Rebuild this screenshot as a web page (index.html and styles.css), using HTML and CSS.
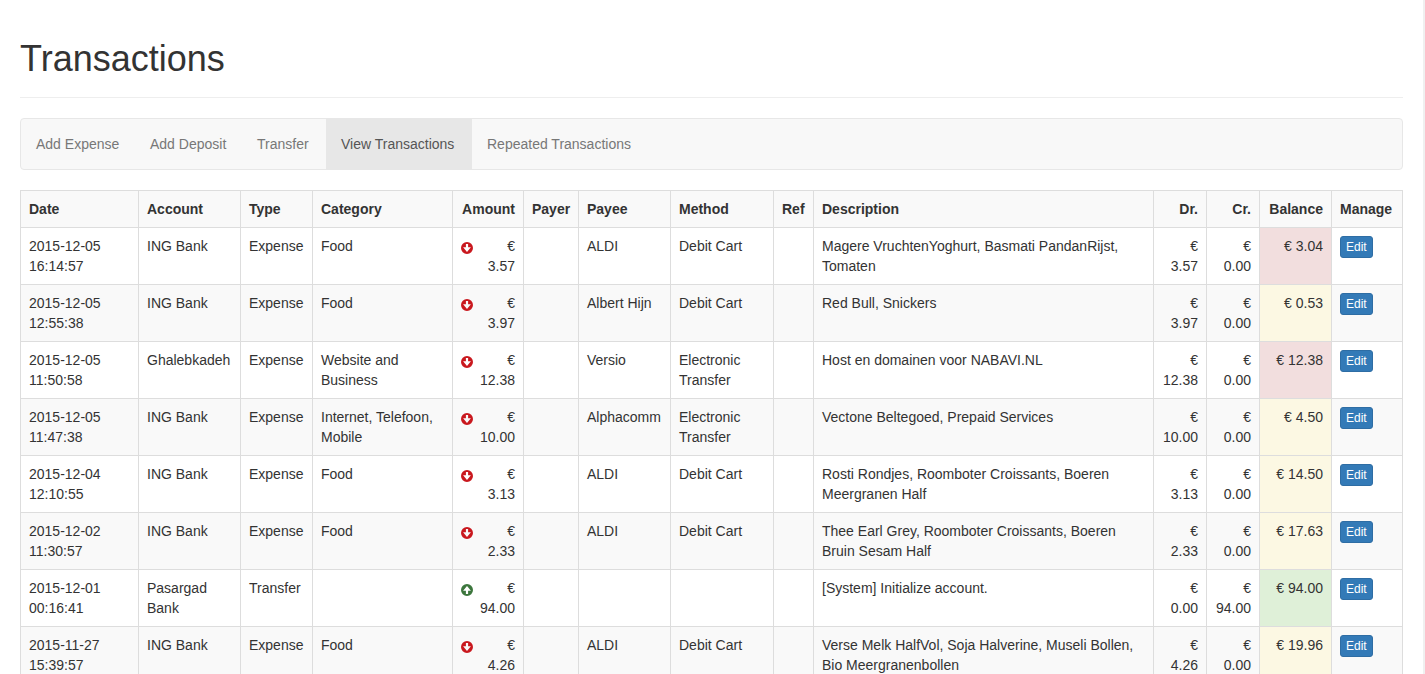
FILE: index.html
```html
<!DOCTYPE html>
<html lang="en">
<head>
<meta charset="utf-8">
<title>Transactions</title>
<link rel="stylesheet" href="styles.css">
</head>
<body>
<svg class="sprite" aria-hidden="true">
  <symbol id="circle-arrow" viewBox="0 0 12 12">
    <path fill-rule="evenodd" d="M6 0a6 6 0 1 0 0 12A6 6 0 0 0 6 0zM4.900 2.100h2.200V5.300H9.900L6 9.900 2.100 5.300H4.900z"/>
  </symbol>
</svg>
<main class="page">
  <h1 class="page-header">Transactions</h1>
  <nav class="navbar" aria-label="Transactions">
    <a class="nav-link" href="#">Add Expense</a>
    <a class="nav-link" href="#">Add Deposit</a>
    <a class="nav-link" href="#">Transfer</a>
    <a class="nav-link active" href="#" aria-current="page">View Transactions</a>
    <a class="nav-link" href="#">Repeated Transactions</a>
  </nav>
  <table class="table">
    <colgroup>
      <col class="c-date"><col class="c-account"><col class="c-type"><col class="c-category"><col class="c-amount"><col class="c-payer"><col class="c-payee"><col class="c-method"><col class="c-ref"><col class="c-description"><col class="c-dr"><col class="c-cr"><col class="c-balance"><col class="c-manage">
    </colgroup>
    <thead>
      <tr><th>Date</th><th>Account</th><th>Type</th><th>Category</th><th class="num">Amount</th><th>Payer</th><th>Payee</th><th>Method</th><th>Ref</th><th>Description</th><th class="num">Dr.</th><th class="num">Cr.</th><th class="num">Balance</th><th>Manage</th></tr>
    </thead>
    <tbody id="rows"></tbody>
  </table>
</main>
<script src="app.js"></script>
</body>
</html>
```

FILE: styles.css
```css
* { box-sizing: border-box; }

html { overflow: hidden; }

body {
  margin: 0;
  color: #333;
  background: #fff;
  font: 14px/20px "Liberation Sans", Arial, sans-serif;
}

.sprite { display: none; }

.page {
  min-height: 100vh;
  padding: 39px 20px 0;
  border-right: 2px solid #f0f0f0;
}

.page-header {
  margin: 0 0 20px;
  padding-bottom: 18px;
  border-bottom: 1px solid #eee;
  font-size: 36px;
  font-weight: 400;
  line-height: 40px;
}

.navbar {
  display: grid;
  grid-template-columns: 114px 107px 84px 146px auto;
  justify-content: start;
  margin-bottom: 20px;
  border: 1px solid #e7e7e7;
  border-radius: 4px;
  background: #f8f8f8;
}

.nav-link {
  padding: 15px;
  color: #777;
  text-decoration: none;
  white-space: nowrap;
}

.nav-link.active {
  color: #555;
  background: #e7e7e7;
}

.table {
  width: 100%;
  table-layout: fixed;
  border-collapse: collapse;
}

.table th,
.table td {
  padding: 8px;
  border: 1px solid #ddd;
  text-align: left;
  vertical-align: top;
}

.table thead tr,
.table tbody tr:nth-child(even) { background: #f9f9f9; }

.table .num { text-align: right; }

.table .danger { background: #f2dede; }
.table .warning { background: #fcf8e3; }
.table .success { background: #dff0d8; }

.c-date { width: 118px; }
.c-account { width: 102px; }
.c-type { width: 72px; }
.c-category { width: 140px; }
.c-amount { width: 71px; }
.c-payer { width: 55px; }
.c-payee { width: 92px; }
.c-method { width: 103px; }
.c-ref { width: 40px; }
.c-dr { width: 53px; }
.c-cr { width: 53px; }
.c-balance { width: 72px; }
.c-manage { width: 71px; }

.amount {
  display: flex;
  justify-content: space-between;
}

.icon {
  width: 12px;
  height: 12px;
  margin-top: 6px;
}

.icon.out { fill: #c9181e; }
.icon.in { fill: #3c763d; transform: rotate(180deg); }

.edit {
  display: block;
  padding: 1px 5px;
  border: 1px solid #2e6da4;
  border-radius: 3px;
  color: #fff;
  background: #337ab7;
  font: 12px/18px "Liberation Sans", Arial, sans-serif;
}
```

FILE: app.js
```js
const rows = [
  ["2015-12-05 16:14:57", "ING Bank", "Expense", "Food", "out", "3.57", "ALDI", "Debit Cart", "Magere VruchtenYoghurt, Basmati PandanRijst, Tomaten", "3.57", "0.00", "3.04", "danger"],
  ["2015-12-05 12:55:38", "ING Bank", "Expense", "Food", "out", "3.97", "Albert Hijn", "Debit Cart", "Red Bull, Snickers", "3.97", "0.00", "0.53", "warning"],
  ["2015-12-05 11:50:58", "Ghalebkadeh", "Expense", "Website and Business", "out", "12.38", "Versio", "Electronic Transfer", "Host en domainen voor NABAVI.NL", "12.38", "0.00", "12.38", "danger"],
  ["2015-12-05 11:47:38", "ING Bank", "Expense", "Internet, Telefoon, Mobile", "out", "10.00", "Alphacomm", "Electronic Transfer", "Vectone Beltegoed, Prepaid Services", "10.00", "0.00", "4.50", "warning"],
  ["2015-12-04 12:10:55", "ING Bank", "Expense", "Food", "out", "3.13", "ALDI", "Debit Cart", "Rosti Rondjes, Roomboter Croissants, Boeren Meergranen Half", "3.13", "0.00", "14.50", "warning"],
  ["2015-12-02 11:30:57", "ING Bank", "Expense", "Food", "out", "2.33", "ALDI", "Debit Cart", "Thee Earl Grey, Roomboter Croissants, Boeren Bruin Sesam Half", "2.33", "0.00", "17.63", "warning"],
  ["2015-12-01 00:16:41", "Pasargad Bank", "Transfer", "", "in", "94.00", "", "", "[System] Initialize account.", "0.00", "94.00", "94.00", "success"],
  ["2015-11-27 15:39:57", "ING Bank", "Expense", "Food", "out", "4.26", "ALDI", "Debit Cart", "Verse Melk HalfVol, Soja Halverine, Museli Bollen, Bio Meergranenbollen", "4.26", "0.00", "19.96", "warning"]
];

document.getElementById("rows").innerHTML = rows.map(
  ([date, account, type, category, dir, amount, payee, method, description, dr, cr, balance, state]) => `
  <tr>
    <td>${date.replace(" ", "<br>")}</td><td>${account}</td><td>${type}</td><td>${category}</td>
    <td class="num"><div class="amount"><svg class="icon ${dir}" aria-hidden="true"><use href="#circle-arrow"/></svg><span>€<br>${amount}</span></div></td>
    <td></td><td>${payee}</td><td>${method}</td><td></td><td>${description}</td>
    <td class="num">€<br>${dr}</td><td class="num">€<br>${cr}</td>
    <td class="num ${state}">€ ${balance}</td>
    <td><button class="edit" type="button">Edit</button></td>
  </tr>`).join("");
```
